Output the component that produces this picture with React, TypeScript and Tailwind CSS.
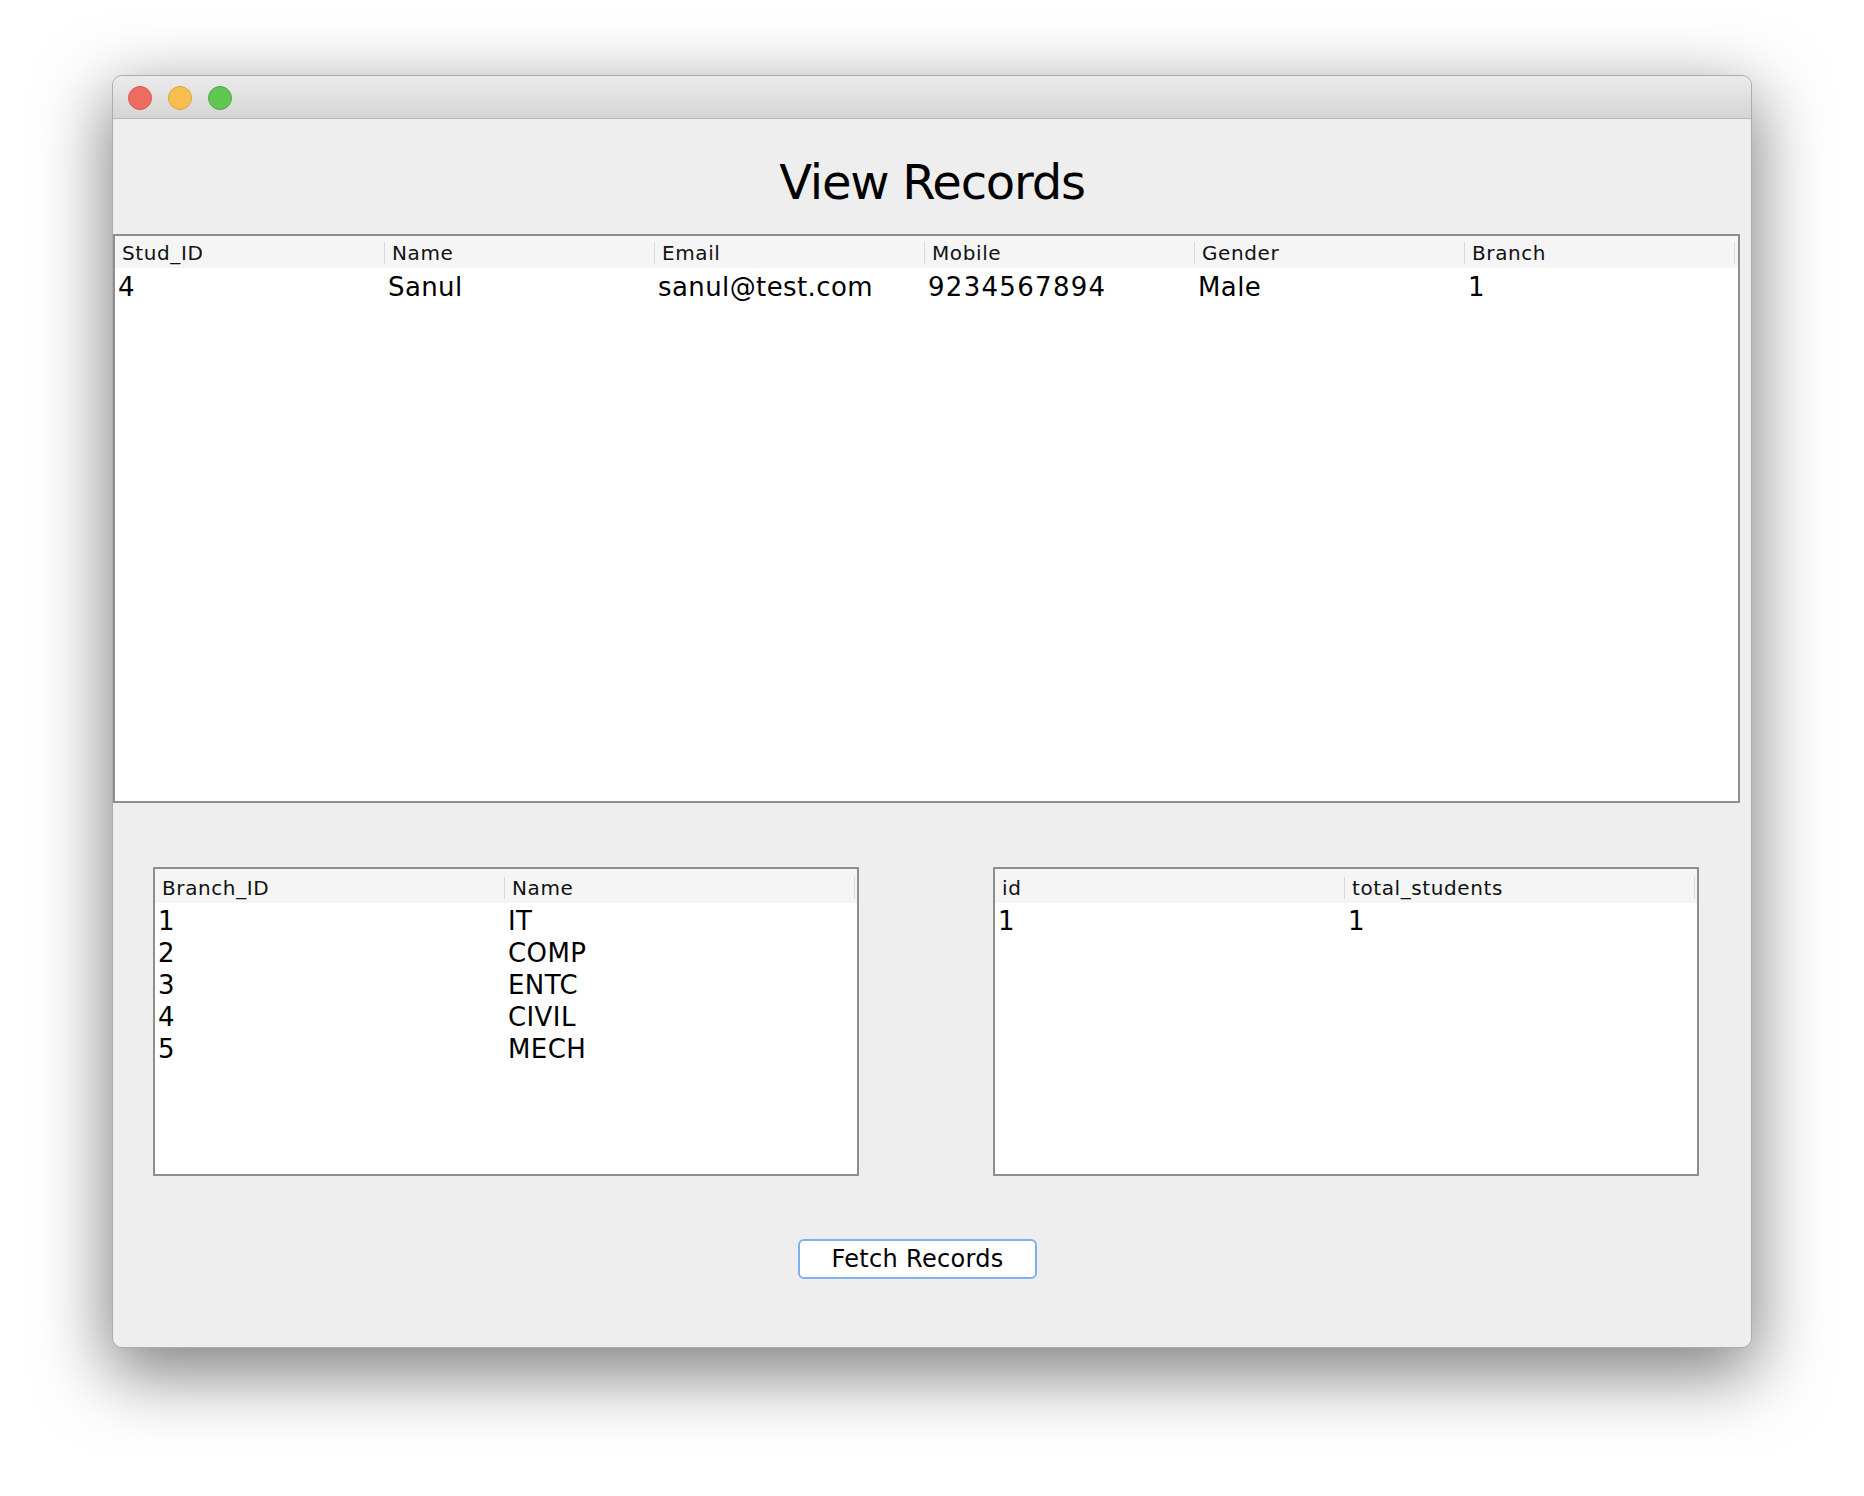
import React from "react";

type Table = {
  columns: string[];
  rows: string[][];
};

const students: Table = {
  columns: ["Stud_ID", "Name", "Email", "Mobile", "Gender", "Branch"],
  rows: [["4", "Sanul", "sanul@test.com", "9234567894", "Male", "1"]],
};

const branches: Table = {
  columns: ["Branch_ID", "Name"],
  rows: [
    ["1", "IT"],
    ["2", "COMP"],
    ["3", "ENTC"],
    ["4", "CIVIL"],
    ["5", "MECH"],
  ],
};

const totals: Table = {
  columns: ["id", "total_students"],
  rows: [["1", "1"]],
};

function TrafficLights() {
  return (
    <div className="flex gap-[16px] pl-[15px] pt-[10px]">
      <span className="h-[24px] w-[24px] rounded-full border border-[#d85a4f] bg-[#ee6b60]" />
      <span className="h-[24px] w-[24px] rounded-full border border-[#dba43a] bg-[#f6be4f]" />
      <span className="h-[24px] w-[24px] rounded-full border border-[#50a843] bg-[#62c655]" />
    </div>
  );
}

function DataTable({
  table,
  colClass,
  headerClass,
  cellPad,
  bodyPad,
  className,
}: {
  table: Table;
  colClass: string;
  headerClass: string;
  cellPad: string;
  bodyPad: string;
  className: string;
}) {
  return (
    <div className={`border-2 border-[#8e8e8e] bg-white ${className}`}>
      <div className={`grid bg-[#f5f5f5] ${colClass} ${headerClass}`}>
        {table.columns.map((col) => (
          <div key={col} className={cellPad}>
            <div className="h-[22px] border-r border-[#d9d9d9] pl-[7px] text-[20px] leading-[22px] tracking-[0.6px] text-[#111]">
              {col}
            </div>
          </div>
        ))}
      </div>
      <div className={bodyPad}>
        {table.rows.map((row, i) => (
          <div key={i} className={`grid h-[32px] ${colClass}`}>
            {row.map((cell, j) => (
              <div
                key={j}
                className={`pl-[3px] text-[26px] leading-[32px] text-black ${
                  cell.length > 3 && /^\d+$/.test(cell) ? "tracking-[1.3px]" : "tracking-[0.4px]"
                }`}
              >
                {cell}
              </div>
            ))}
          </div>
        ))}
      </div>
    </div>
  );
}

export default function App() {
  return (
    <div className="h-[1496px] w-[1864px] bg-white pl-[112px] pt-[75px] font-['DejaVu_Sans',sans-serif]">
      <div className="w-[1640px] overflow-hidden rounded-[10px] border border-[#acacac] bg-[#eeeeee] shadow-[0_22px_70px_4px_rgba(0,0,0,0.5)]">
        <div className="h-[43px] border-b border-[#b9b9b9] bg-gradient-to-b from-[#ebebeb] to-[#d5d5d5]">
          <TrafficLights />
        </div>

        <div className="flex flex-col pb-[68px]">
          <h1 className="mb-[28px] mt-[39px] h-[48px] text-center text-[48px] font-normal leading-none tracking-[-1.2px] text-black">
            View Records
          </h1>

          <DataTable
            table={students}
            colClass="grid-cols-[repeat(6,270px)]"
            headerClass="h-[32px]"
            cellPad="pt-[6px]"
            bodyPad="pt-[3px]"
            className="mr-[11px] h-[569px]"
          />

          <div className="mt-[64px] flex gap-[134px] pl-[40px]">
            <DataTable
              table={branches}
              colClass="grid-cols-[repeat(2,350px)]"
              headerClass="h-[34px]"
              cellPad="pt-[8px]"
              bodyPad="pt-[2px]"
              className="h-[309px] w-[706px]"
            />
            <DataTable
              table={totals}
              colClass="grid-cols-[repeat(2,350px)]"
              headerClass="h-[34px]"
              cellPad="pt-[8px]"
              bodyPad="pt-[2px]"
              className="h-[309px] w-[706px]"
            />
          </div>

          <div className="mt-[63px] flex pl-[685px]">
            <button className="h-[40px] w-[239px] rounded-[6px] border-2 border-[#7fb1ee] bg-white text-[24px] leading-none tracking-[0.3px] text-black">
              Fetch Records
            </button>
          </div>
        </div>
      </div>
    </div>
  );
}
